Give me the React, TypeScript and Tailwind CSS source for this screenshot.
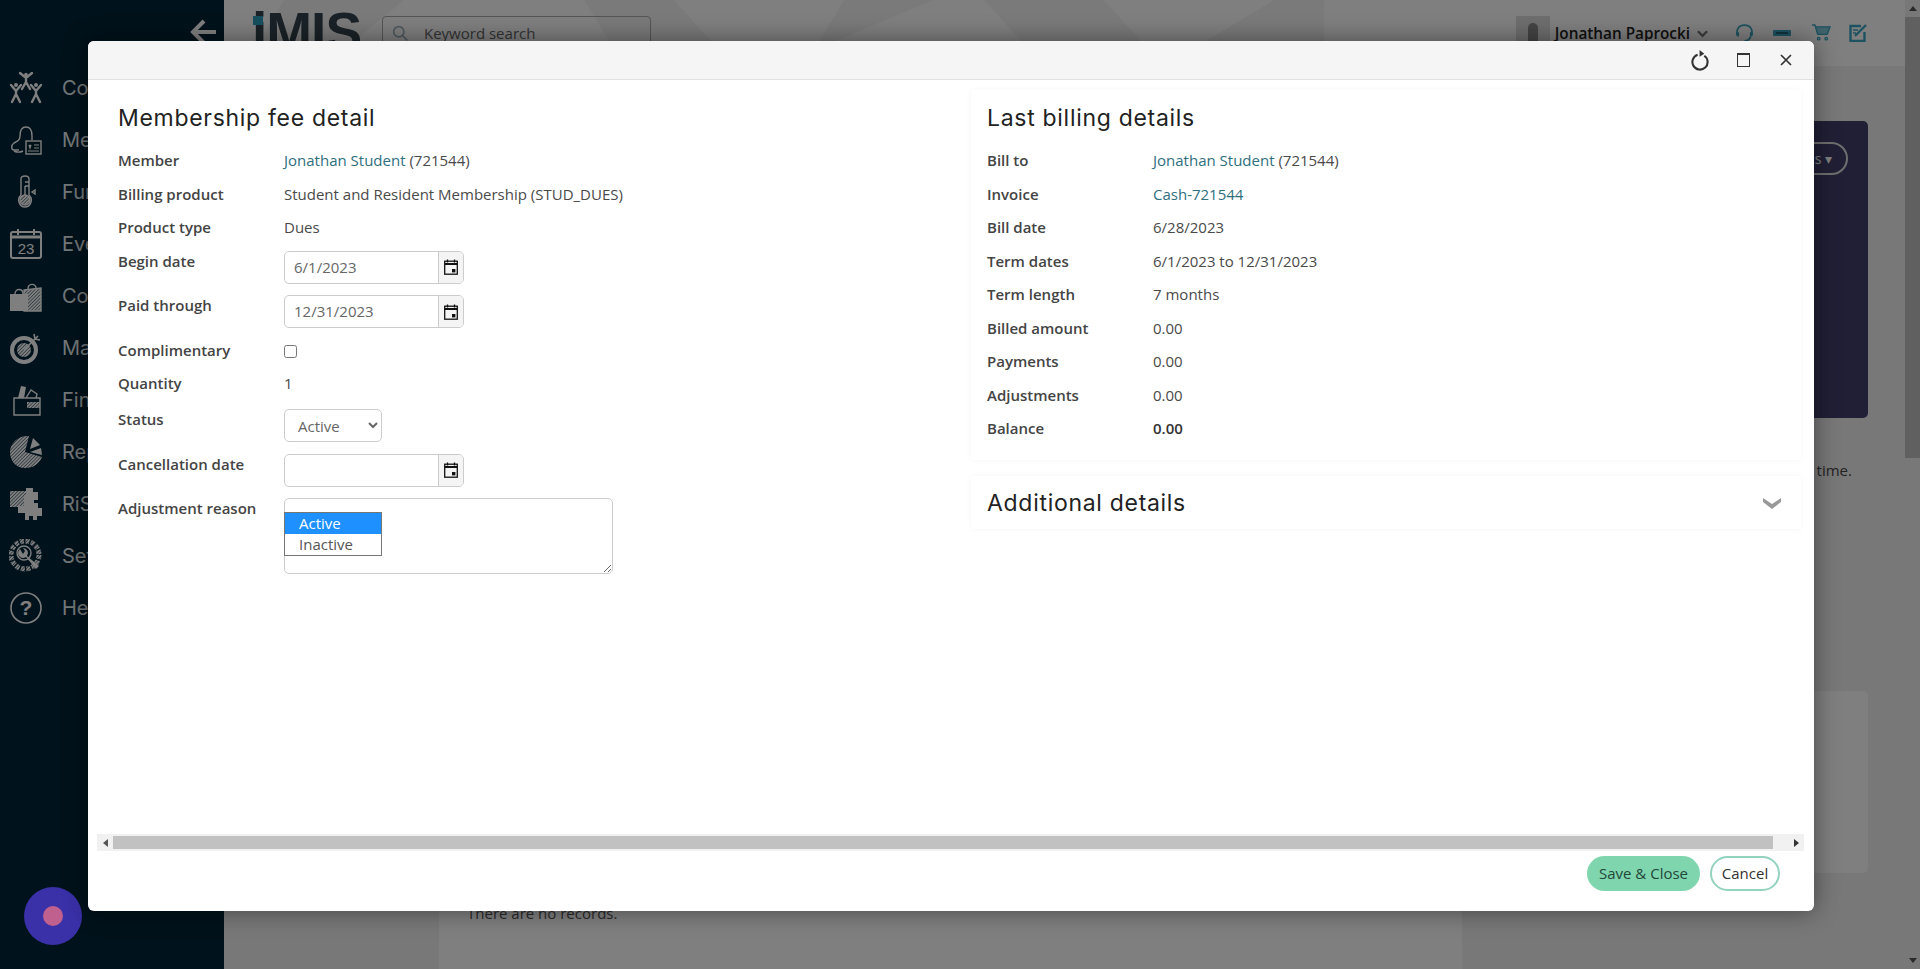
import type { ReactNode } from "react";

const font = "font-['Open_Sans',sans-serif]";
const headingFont = "font-['Inter',sans-serif]";

function Hatch({ id }: { id: string }) {
  return (
    <defs>
      <pattern id={id} width="2.4" height="2.4" patternUnits="userSpaceOnUse" patternTransform="rotate(45)">
        <rect width="1.2" height="2.4" fill="#fff" />
      </pattern>
    </defs>
  );
}

function Icon({ children }: { children: ReactNode }) {
  return (
    <svg viewBox="0 0 34 34" className="w-[34px] h-[34px] shrink-0" fill="none" stroke="#fff" strokeWidth="1.4">
      {children}
    </svg>
  );
}

const navItems: { label: string; icon: ReactNode }[] = [
  {
    label: "Community",
    icon: (
      <Icon>
        <g strokeWidth="2.4" strokeLinecap="round">
          <circle cx="17" cy="3.5" r="1.8" fill="#fff" stroke="none" />
          <path d="M11 2l6 5 6-5M17 7v4M17 11l-4 7M17 11l4 7" />
          <circle cx="7" cy="14" r="2" fill="#fff" stroke="none" />
          <circle cx="27" cy="14" r="2" fill="#fff" stroke="none" />
          <path d="M2 14l5 6 5-6M7 20v3M7 23l-4 8M7 23l4 8" />
          <path d="M22 14l5 6 5-6M27 20v3M27 23l-4 8M27 23l4 8" />
        </g>
      </Icon>
    ),
  },
  {
    label: "Membership",
    icon: (
      <Icon>
        <path d="M10 27H5c-3 0-3-5 0-7 4-2 6-3 6-7 0-5 2-9 6-9s6 4 6 9v4" />
        <path d="M5 28c4 2 7 1 9 0" />
        <rect x="17" y="18" width="15" height="13" fill="#00242f" />
        <path d="M20 22l1 1 1-1-1 3zM25 22h5M25 25h5M19 28h11" strokeWidth="1.2" />
      </Icon>
    ),
  },
  {
    label: "Fundraising",
    icon: (
      <Icon>
        <Hatch id="h3" />
        <path d="M12 20V4c0-4 8-4 8 0v16c5 5 1 12-4 12s-9-7-4-12z" />
        <circle cx="16" cy="25" r="5" fill="url(#h3)" />
        <path d="M16 11v9M16 7h4M16 11h4M26 15l-3 2 3 2z" />
      </Icon>
    ),
  },
  {
    label: "Events",
    icon: (
      <Icon>
        <rect x="2" y="5" width="30" height="26" rx="2" strokeWidth="2" />
        <path d="M2 10h30" strokeWidth="3" />
        <path d="M9 2v6M25 2v6" strokeWidth="2" />
        <text x="17" y="27" textAnchor="middle" fontSize="15" fill="#fff" stroke="none" fontFamily="Liberation Sans, sans-serif">23</text>
      </Icon>
    ),
  },
  {
    label: "Commerce",
    icon: (
      <Icon>
        <Hatch id="h5" />
        <path d="M15 11l17-2v23H15z" fill="url(#h5)" />
        <path d="M19 10c0-6 8-6 8-1" />
        <path d="M1 15h18v17H1z" fill="#fff" stroke="none" />
        <path d="M6 15c0-6 8-6 8 0" />
      </Icon>
    ),
  },
  {
    label: "Marketing",
    icon: (
      <Icon>
        <Hatch id="h6" />
        <circle cx="15" cy="19" r="12" strokeWidth="4" />
        <circle cx="15" cy="19" r="7" fill="url(#h6)" stroke="none" />
        <path d="M15 19L29 5M25 3l1 5 5 1" strokeWidth="1.6" />
      </Icon>
    ),
  },
  {
    label: "Finance",
    icon: (
      <Icon>
        <Hatch id="h7" />
        <path d="M5 15h26v17H5z" />
        <path d="M9 15l3-12 5 1-2 11z" fill="#fff" stroke="none" />
        <path d="M17 15l5-8 6 4-1 4" />
        <rect x="18" y="19" width="13" height="6" fill="url(#h7)" stroke="none" />
      </Icon>
    ),
  },
  {
    label: "Reports",
    icon: (
      <Icon>
        <Hatch id="h8" />
        <path d="M20 1L16 17l17 5C30 30 23 33 16 33 7 33 1 26 1 17 1 8 10 0 20 1z" fill="url(#h8)" stroke="none" />
        <path d="M24 3l7 7-10 4z" fill="#fff" stroke="none" />
        <path d="M32 13l1 7-12-3z" fill="#fff" stroke="none" />
      </Icon>
    ),
  },
  {
    label: "RiSE",
    icon: (
      <Icon>
        <Hatch id="h9" />
        <path d="M1 4h16v16H1z" fill="url(#h9)" stroke="none" />
        <path d="M17 1h7v4h5v8h-4v3h4v5h4v8h-5v4h-4v-4h-4v4h-4v-7H9v-7h6V8h2z" fill="#fff" stroke="none" />
      </Icon>
    ),
  },
  {
    label: "Settings",
    icon: (
      <Icon>
        <Hatch id="h10" />
        <circle cx="16" cy="16" r="14" stroke="url(#h10)" strokeWidth="5" strokeDasharray="4 1.5" />
        <circle cx="15" cy="14" r="7" />
        <path d="M11 10a5 5 0 0 0 6 8l10 12 3-3-12-10a5 5 0 0 0-4-8l2 3-2 3-3-5z" fill="#fff" stroke="none" />
      </Icon>
    ),
  },
  {
    label: "Help",
    icon: (
      <Icon>
        <circle cx="17" cy="17" r="15" strokeWidth="1.6" />
        <text x="17" y="24" textAnchor="middle" fontSize="21" fontWeight="700" fill="#fff" stroke="none" fontFamily="Liberation Sans, sans-serif">?</text>
      </Icon>
    ),
  },
];

function Sidebar() {
  return (
    <div className="w-[224px] shrink-0 bg-[#002436] flex flex-col">
      <div className="h-[62px] flex justify-end pr-[8px] pt-[19px]">
        <svg viewBox="0 0 26 26" className="w-[26px] h-[26px]" fill="none" stroke="#fff" strokeWidth="4">
          <path d="M26 13H3M14 2L3 13l11 11" />
        </svg>
      </div>
      {navItems.map((item) => (
        <div key={item.label} className="h-[52px] flex items-center pl-[9px] gap-[19px]">
          {item.icon}
          <span className={`${headingFont} whitespace-nowrap text-[20px] text-[#e6eef0]`}>{item.label}</span>
        </div>
      ))}
    </div>
  );
}

function TopBar() {
  return (
    <div className="relative h-[66px] shrink-0 bg-[#ffffff] flex items-start overflow-hidden">
      <svg className="absolute left-0 top-0 w-[1100px] h-[66px]" viewBox="0 0 1100 66" fill="#f5f5f5">
        <path d="M60 0h120l-80 66H20zM360 0h90l60 66H400zM620 0h90l-120 50zM760 0h120l60 66H820zM940 66l110-66h50v66z" />
      </svg>
      <div className="relative ml-[28px] mt-[2px] w-[109px] h-[60px]">
        <span className="font-['Liberation_Sans',sans-serif] font-bold text-[55px] leading-[60px] text-[#34444f] tracking-[-1px]">iMIS</span>
        <span className="absolute left-[1px] top-[14px] w-[10px] h-[9px] bg-[#2f9ebd]" />
      </div>
      <div className={`relative ml-[21px] mt-[16px] w-[269px] h-[34px] rounded-[4px] border border-[#aaa] flex items-center pl-[9px] gap-[15px] ${font}`}>
        <svg viewBox="0 0 20 20" className="w-[17px] h-[17px]" fill="none" stroke="#9fb3bd" strokeWidth="2">
          <circle cx="8" cy="8" r="6" />
          <path d="M12.5 12.5L18 18" />
        </svg>
        <span className="text-[15px] text-[#666]">Keyword search</span>
      </div>
      <div className={`relative ml-auto mr-[38px] mt-[16px] flex items-start ${font}`}>
        <div className="w-[34px] h-[34px] bg-[#dcdcdc] flex justify-center pt-[7px]">
          <div className="w-[10px] h-[27px] rounded-full bg-[#888]" />
        </div>
        <span className="ml-[5px] mt-[6px] text-[15.3px] leading-[22px] font-semibold text-[#222]">Jonathan Paprocki</span>
        <svg viewBox="0 0 12 8" className="ml-[7px] mt-[14px] w-[11px] h-[8px]" fill="none" stroke="#777" strokeWidth="2.4">
          <path d="M1 1l5 5 5-5" />
        </svg>
        <svg viewBox="0 0 22 22" className="ml-[27px] mt-[6px] w-[19px] h-[22px]" fill="none" stroke="#3aa5c0" strokeWidth="2">
          <path d="M4 15C0 8 4 2 11 2s11 6 7 13" />
          <path d="M3 10v4M19 10v4" strokeWidth="3.5" />
          <path d="M18 15c-1 4-4 5-7 5" />
        </svg>
        <svg viewBox="0 0 18 6" className="ml-[19px] mt-[14px] w-[18px] h-[6px]">
          <rect width="18" height="6" rx="1" fill="#3aa5c0" />
          <rect x="3" y="2.4" width="12" height="1.2" fill="#0d3a46" />
        </svg>
        <svg viewBox="0 0 20 18" className="ml-[21px] mt-[8px] w-[19px] h-[17px]" fill="none" stroke="#3aa5c0" strokeWidth="1.5">
          <path d="M0 1h3l3 10h10l3-8H3" />
          <path d="M4 3h15l-3 8H6z" fill="#3aa5c0" fillOpacity="0.65" stroke="none" />
          <circle cx="7" cy="15.5" r="1.3" />
          <circle cx="15" cy="15.5" r="1.3" />
        </svg>
        <svg viewBox="0 0 18 18" className="ml-[18px] mt-[8px] w-[18px] h-[18px]" fill="none" stroke="#3aa5c0" strokeWidth="2.4">
          <path d="M12 2H1.5v15h14V8" />
          <path d="M6 12L17 1" />
          <path d="M4 6h5M4 9h3" strokeWidth="1.4" />
        </svg>
      </div>
    </div>
  );
}

function PageBehind() {
  return (
    <div className="flex-1 min-w-0 flex flex-col">
      <TopBar />
      <div className={`flex-1 bg-[#f1f1f1] flex ${font}`}>
        <div className="w-[215px] shrink-0" />
        <div className="w-[1023px] shrink-0 bg-white mt-[625px] pl-[28px] pt-[211px] text-[15px] text-[#555]">
          There are no records.
        </div>
        <div className="w-[388px] shrink-0 ml-[18px] flex flex-col">
          <div className="mt-[55px] h-[297px] rounded-[5px] bg-[#403e6a] flex justify-end items-start pt-[21px] pr-[20px]">
            <span className="h-[33px] px-[14px] rounded-full border-2 border-[#ddd] text-white text-[14px] flex items-center">Actions ▾</span>
          </div>
          <div className="mt-[41px] pr-[16px] text-right text-[15px] leading-[22px] text-[#444]">at any time.</div>
          <div className="mt-[210px] h-[182px] rounded-[5px] bg-white" />
        </div>
      </div>
    </div>
  );
}

function PageScrollbar() {
  return (
    <div className="w-[15px] shrink-0 bg-[#f1f1f1] flex flex-col items-center relative">
      <div className="h-[17px] flex items-center">
        <div className="w-0 h-0 border-x-[4px] border-x-transparent border-b-[5px] border-b-[#555]" />
      </div>
      <div className="w-full h-[441px] bg-[#c1c1c1]" />
      <div className="flex-1" />
      <div className="h-[17px] flex items-center">
        <div className="w-0 h-0 border-x-[4px] border-x-transparent border-t-[5px] border-t-[#555]" />
      </div>
    </div>
  );
}

function CalendarIcon() {
  return (
    <svg viewBox="0 0 14 16" className="w-[14px] h-[16px]" fill="none" stroke="#111" strokeWidth="1.3">
      <rect x="0.7" y="2.2" width="12.6" height="13" />
      <path d="M0.7 5h12.6" strokeWidth="2" />
      <path d="M3.5 0.5v3M10.5 0.5v3" />
      <rect x="8" y="10" width="3.4" height="3.4" fill="#111" stroke="none" />
    </svg>
  );
}

function DateInput({ value }: { value: string }) {
  return (
    <div className="w-[180px] h-[33px] flex rounded-[5px] border border-[#ccc] overflow-hidden">
      <input
        type="text"
        defaultValue={value}
        className="flex-1 min-w-0 px-[9px] text-[15px] text-[#666] outline-none"
      />
      <div className="w-[25px] shrink-0 bg-[#f4f4f4] border-l border-[#ccc] flex items-center justify-center">
        <CalendarIcon />
      </div>
    </div>
  );
}

function Row({ label, children, className = "", widget = false }: { label: string; children: ReactNode; className?: string; widget?: boolean }) {
  return (
    <div className={`flex items-start ${className}`}>
      <div className="w-[166px] shrink-0 relative -top-[1px] text-[15px] leading-[22px] font-semibold text-[#444]">{label}</div>
      <div className={widget ? "" : "relative -top-[1px] text-[15px] leading-[22px] text-[#4a4a4a]"}>{children}</div>
    </div>
  );
}

function Lnk({ children }: { children: ReactNode }) {
  return <a className="text-[#2f6f7e]">{children}</a>;
}

function Heading({ children, className = "" }: { children: ReactNode; className?: string }) {
  return <h2 className={`${headingFont} text-[23px] leading-[30px] tracking-[0.7px] text-[#222] ${className}`}>{children}</h2>;
}

function LeftForm() {
  return (
    <div className="w-[883px] shrink-0 pl-[30px] pt-[23px]">
      <Heading className="mb-[17px]">Membership fee detail</Heading>
      <div className="flex flex-col gap-[11.5px]">
        <Row label="Member">
          <Lnk>Jonathan Student</Lnk> (721544)
        </Row>
        <Row label="Billing product">Student and Resident Membership (STUD_DUES)</Row>
        <Row label="Product type">Dues</Row>
        <Row label="Begin date" widget>
          <DateInput value="6/1/2023" />
        </Row>
        <Row label="Paid through" widget>
          <DateInput value="12/31/2023" />
        </Row>
        <Row label="Complimentary" widget>
          <input type="checkbox" className="block w-[13px] h-[13px] mt-[5px]" />
        </Row>
        <Row label="Quantity">1</Row>
        <Row label="Status" className="mt-[2.5px]" widget>
          <select className="block w-[98px] h-[33px] rounded-[5px] border border-[#ccc] bg-white pl-[9px] text-[15px] text-[#666]">
            <option>Active</option>
            <option>Inactive</option>
          </select>
        </Row>
        <Row label="Cancellation date" widget>
          <DateInput value="" />
        </Row>
        <Row label="Adjustment reason" widget>
          <div className="relative">
            <textarea className="block w-[329px] h-[76px] rounded-[5px] border border-[#ccc] outline-none" />
            {/* open list of the Status select */}
            <div className="absolute left-0 top-[14px] w-[98px] border border-[#767676] bg-white text-[15px] leading-[21px] text-[#555]">
              <div className="bg-[#1e90ff] text-white pl-[14px]">Active</div>
              <div className="pl-[14px]">Inactive</div>
            </div>
          </div>
        </Row>
      </div>
    </div>
  );
}

function RightPanels() {
  return (
    <div className="flex-1 min-w-0 pr-[13px] pt-[10px]">
      <div className="h-[370px] px-[16px] pt-[13px] bg-white shadow-[0_0_6px_rgba(0,0,0,0.04)]">
        <Heading className="mb-[17px]">Last billing details</Heading>
        <div className="flex flex-col gap-[11.5px]">
          <Row label="Bill to">
            <Lnk>Jonathan Student</Lnk> (721544)
          </Row>
          <Row label="Invoice">
            <Lnk>Cash-721544</Lnk>
          </Row>
          <Row label="Bill date">6/28/2023</Row>
          <Row label="Term dates">6/1/2023 to 12/31/2023</Row>
          <Row label="Term length">7 months</Row>
          <Row label="Billed amount">0.00</Row>
          <Row label="Payments">0.00</Row>
          <Row label="Adjustments">0.00</Row>
          <Row label="Balance">
            <b className="font-semibold text-[#333]">0.00</b>
          </Row>
        </div>
      </div>
      <div className="mt-[16px] h-[53px] px-[16px] flex items-center justify-between bg-white shadow-[0_0_6px_rgba(0,0,0,0.04)]">
        <Heading>Additional details</Heading>
        <svg viewBox="0 0 18 12" className="w-[18px] h-[12px] mr-[4px]" fill="#999">
          <path d="M0 1l9 6 9-6v4l-9 7-9-7z" />
        </svg>
      </div>
    </div>
  );
}

function Modal() {
  return (
    <div className={`absolute left-[88px] top-[41px] w-[1726px] h-[870px] rounded-[6px] bg-white flex flex-col overflow-hidden shadow-[0_0_24px_rgba(0,0,0,0.45)] ${font}`}>
      <div className="h-[39px] shrink-0 bg-[#f5f5f5] border-b border-[#e0e0e0] flex items-center justify-end pr-[22px]">
        <svg viewBox="0 0 20 22" className="w-[19px] h-[21px]" fill="none" stroke="#333" strokeWidth="2.2">
          <path d="M7 5a8 8 0 1 0 7 1" />
          <path d="M9 0l5 4-5 3z" fill="#333" stroke="none" />
        </svg>
        <div className="ml-[27px] w-[13px] h-[14px] border border-[#333] border-t-2" />
        <svg viewBox="0 0 12 12" className="ml-[30px] w-[12px] h-[12px]" fill="none" stroke="#333" strokeWidth="1.7">
          <path d="M1 1l10 10M11 1L1 11" />
        </svg>
      </div>
      <div className="flex-1 min-h-0 flex overflow-hidden">
        <LeftForm />
        <RightPanels />
      </div>
      <div className="h-[17px] shrink-0 ml-[9px] mr-[10px] bg-[#f1f1f1] flex items-center">
        <div className="w-[16px] flex justify-center">
          <div className="w-0 h-0 border-y-[4px] border-y-transparent border-r-[5px] border-r-[#555]" />
        </div>
        <div className="flex-1 h-[13px] bg-[#c1c1c1]" />
        <div className="w-[31px] flex justify-end pr-[5px]">
          <div className="w-0 h-0 border-y-[4px] border-y-transparent border-l-[5px] border-l-[#333]" />
        </div>
      </div>
      <div className="h-[60px] shrink-0 flex justify-end items-start gap-[10px] pr-[34px] pt-[5px]">
        <button className="w-[113px] h-[35px] rounded-full bg-[#7fd6ae] text-[15px] text-[#24463a]">Save &amp; Close</button>
        <button className="w-[70px] h-[35px] rounded-full border-2 border-[#93d3bd] bg-white text-[15px] text-[#333]">Cancel</button>
      </div>
    </div>
  );
}

export default function App() {
  return (
    <div className="relative w-[1920px] h-[969px] flex overflow-hidden">
      <Sidebar />
      <PageBehind />
      <PageScrollbar />
      <div className="absolute inset-0 bg-black/50" />
      <div className="absolute left-[24px] top-[887px] w-[58px] h-[58px] rounded-full bg-[#3a30a8] flex items-center justify-center">
        <div className="w-[20px] h-[20px] rounded-full bg-[#c0608f]" />
      </div>
      <Modal />
    </div>
  );
}
